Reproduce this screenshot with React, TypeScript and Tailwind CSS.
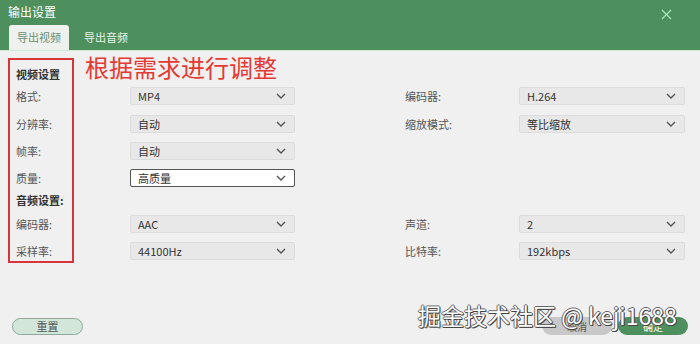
import React from "react";

const font = { fontFamily: '"Noto Sans CJK SC", "Noto Sans", sans-serif' };

function Chevron() {
  return (
    <svg width="10" height="6" viewBox="0 0 10 6" className="shrink-0">
      <path d="M1 1 L5 5 L9 1" fill="none" stroke="#555" strokeWidth="1.4" />
    </svg>
  );
}

function Select({ value, active = false, w = "w-[165px]" }: { value: string; active?: boolean; w?: string }) {
  return (
    <div
      className={`${w} h-[18px] flex items-center justify-between pl-[7px] pr-[8px] rounded-[2px] text-[11px] text-[#333] ${
        active ? "bg-white border border-[#555]" : "bg-[#e8e8e8] border border-[#dcdcdc]"
      }`}
    >
      <span>{value}</span>
      <Chevron />
    </div>
  );
}

function Label({ children }: { children: React.ReactNode }) {
  return <div className="w-[114px] text-[11px] text-[#555]">{children}</div>;
}

function Row({ l1, v1, l2, v2, active, mt }: { l1: string; v1: string; l2?: string; v2?: string; active?: boolean; mt: string }) {
  return (
    <div className={`flex items-center h-[18px] ${mt}`}>
      <Label>{l1}</Label>
      <Select value={v1} active={active} />
      {l2 ? (
        <>
          <div className="w-[110px]" />
          <Label>{l2}</Label>
          <Select value={v2 || ""} w="w-[166px]" />
        </>
      ) : null}
    </div>
  );
}

export default function App() {
  return (
    <div className="w-[700px] h-[344px] bg-[#f0f0f0] flex flex-col relative overflow-hidden" style={font}>
      {/* header */}
      <div className="h-[50px] bg-[#4d8f5d] flex flex-col justify-between relative">
        <div className="flex items-center justify-between pl-[8px] pr-[28px] pt-[4px]">
          <span className="text-[12px] text-white leading-[16px]">输出设置</span>
          <svg width="11" height="11" viewBox="0 0 11 11" className="mt-[4px]">
            <path d="M1 1 L10 10 M10 1 L1 10" stroke="#a9e6b9" strokeWidth="1.3" />
          </svg>
        </div>
        <div className="flex items-end pl-[9px]">
          <div className="w-[60px] h-[25px] bg-[#eef1ee] rounded-t-[3px] flex items-center justify-center text-[11px] text-[#6a8f74]">
            导出视频
          </div>
          <div className="ml-[15px] h-[25px] flex items-center text-[11px] text-[#e6f3e9]">导出音频</div>
        </div>
      </div>
      <div className="h-[1px] bg-[#cfe9d6]" />

      {/* body */}
      <div className="flex-1 pl-[16px] pt-[14px] relative">
        <div className="h-[18px] flex items-center text-[11px] font-bold text-[#333]">视频设置</div>
        <Row l1="格式:" v1="MP4" l2="编码器:" v2="H.264" mt="mt-[4px]" />
        <Row l1="分辨率:" v1="自动" l2="缩放模式:" v2="等比缩放" mt="mt-[10px]" />
        <Row l1="帧率:" v1="自动" mt="mt-[9px]" />
        <Row l1="质量:" v1="高质量" active mt="mt-[9px]" />
        <div className="h-[18px] mt-[4px] flex items-center text-[11px] font-bold text-[#333]">音频设置:</div>
        <Row l1="编码器:" v1="AAC" l2="声道:" v2="2" mt="mt-[6px]" />
        <Row l1="采样率:" v1="44100Hz" l2="比特率:" v2="192kbps" mt="mt-[9px]" />
      </div>

      {/* footer */}
      <div className="flex items-center justify-between pl-[12px] pr-[12px] pb-[9px]">
        <div className="w-[71px] h-[17px] rounded-full bg-[#d3e6da] border border-[#8fa898] flex items-center justify-center text-[11px] text-[#555]">
          重置
        </div>
        <div className="flex gap-[6px]">
          <div className="w-[70px] h-[18px] rounded-full bg-[#c8c8c8] flex items-center justify-center text-[10px] text-[#555]">取消</div>
          <div className="w-[70px] h-[18px] rounded-full bg-[#4d8f5d] flex items-center justify-center text-[10px] text-white">确定</div>
        </div>
      </div>

      {/* annotations */}
      <div className="absolute left-[8px] top-[58px] w-[66px] h-[205px] border-2 border-[#d8353b]" />
      <div className="absolute left-[85px] top-[51px] text-[24px] leading-[32px] text-[#e53a33]">根据需求进行调整</div>
      <div
        className="absolute left-[418px] top-[299px] text-[23px] leading-[32px] text-white"
        style={{ textShadow: "1px 1px 0 #444, -1px 0 0 #666, 0 -1px 0 #666, 1px 0 0 #555, 0 1px 0 #555" }}
      >
        掘金技术社区 @ keji1688
      </div>
    </div>
  );
}
